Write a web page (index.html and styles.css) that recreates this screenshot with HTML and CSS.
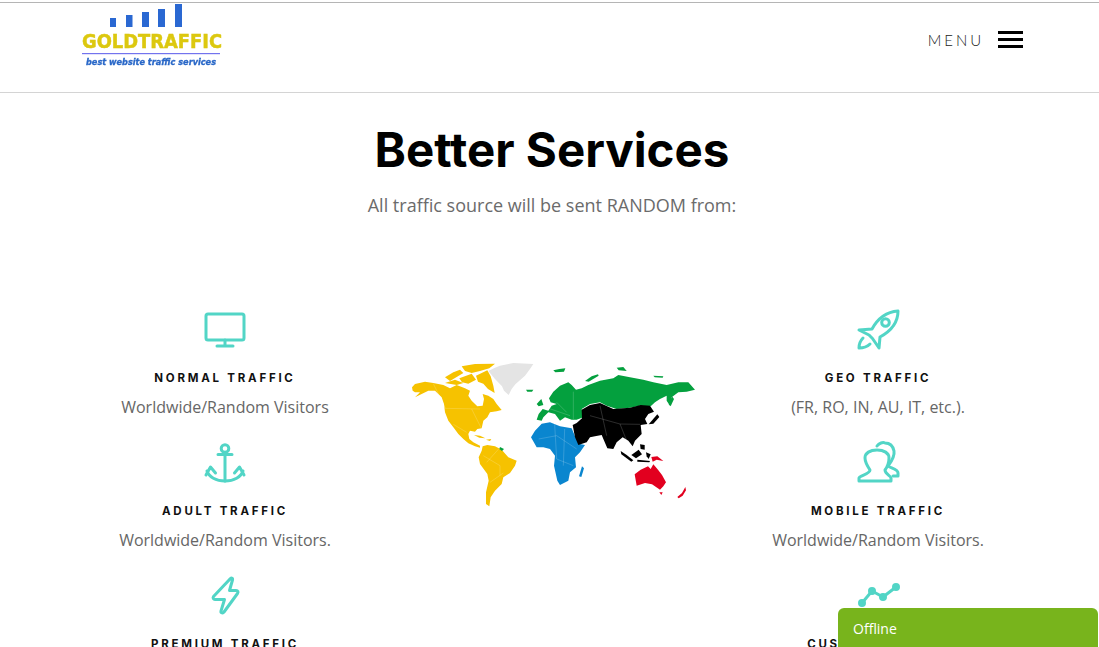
FILE: index.html
```html
<!DOCTYPE html>
<html lang="en">
<head>
  <meta charset="UTF-8">
  <meta name="viewport" content="width=device-width, initial-scale=1.0">
  <title>Goldtraffic - Better Services</title>
  <link rel="stylesheet" href="styles.css">
</head>
<body>

  <header class="header">
    <a class="logo" href="#">
      <svg width="180" height="66" viewBox="0 0 180 66">
        <g fill="#2a68d2">
          <rect x="28" y="15" width="6" height="9"/>
          <rect x="44" y="12" width="6.5" height="12"/>
          <rect x="60" y="9" width="7" height="15"/>
          <rect x="76" y="6" width="7" height="18"/>
          <rect x="93" y="1" width="7" height="23"/>
        </g>
        <text class="logo-name" x="0" y="45" textLength="140" lengthAdjust="spacingAndGlyphs">GOLDTRAFFIC</text>
        <rect x="0" y="50" width="138" height="1.2" fill="#7373ee"/>
        <text class="logo-tag" x="4" y="62" textLength="130" lengthAdjust="spacingAndGlyphs">best website traffic services</text>
      </svg>
    </a>
    <button class="menu-btn">
      <span class="menu-label">MENU</span>
      <span class="burger"><i></i><i></i><i></i></span>
    </button>
  </header>

  <main class="services">
    <h1>Better Services</h1>
    <p class="lead">All traffic source will be sent RANDOM from:</p>

    <div class="service-grid">
      <div class="service-col">
        <div class="service">
          <svg class="icon" viewBox="0 0 40 40">
            <rect x="1" y="5" width="38" height="26" rx="2"/>
            <path d="M20 31v6M12 37h16"/>
          </svg>
          <h3>NORMAL TRAFFIC</h3>
          <p>Worldwide/Random Visitors</p>
        </div>
        <div class="service">
          <svg class="icon" viewBox="0 0 40 40">
            <circle cx="20" cy="6.500" r="3.800"/>
            <path d="M20 10.500V39M13 12.500h14"/>
            <path d="M2 29C4 35 11 39 20 39S36 35 38 29"/>
            <path d="M1 33L5.500 25 10.500 31M39 33L34.500 25 29.500 31"/>
          </svg>
          <h3>ADULT TRAFFIC</h3>
          <p>Worldwide/Random Visitors.</p>
        </div>
        <div class="service">
          <svg class="icon" viewBox="0 0 40 40">
            <path d="M25 4C26 2.500 28 3 27.500 5L24.500 15.500H31C33 15.500 33.500 17 32.500 18.500L19 37C18 38.500 15.500 38 16 36L19.500 24.500H10C8.500 24.500 7.500 23 8.500 21.500Z"/>
          </svg>
          <h3>PREMIUM TRAFFIC</h3>
          <p>Worldwide/Random Visitors.</p>
        </div>
      </div>

      <div class="map-col">
        <svg class="world-map" viewBox="0 0 930 510">
          <g fill="#f6c200">
            <path d="M36 115L45 105 75 98 100 102 130 108 150 118 170 108 195 118 210 125 205 140 215 155 232 172 248 170 252 150 248 135 265 140 280 150 290 165 305 183 290 187 270 190 262 205 250 215 245 238 232 240 225 248 210 245 205 255 208 270 220 280 240 290 240 296 225 292 205 283 190 270 175 255 160 235 145 215 135 190 132 165 125 145 105 125 85 125 65 135 45 145 60 130 45 130 38 125Z"/>
            <path d="M248 292L262 288 285 292 305 302 325 325 350 335 345 350 330 372 310 385 305 405 285 425 272 445 268 472 258 465 258 430 266 395 262 375 240 345 236 325 245 305Z"/>
            <path d="M135 85L160 70 180 62 190 72 170 84 150 96Z"/>
            <path d="M185 52L225 45 285 44 268 58 240 66 215 72 195 66Z"/>
            <path d="M178 88L215 74 228 92 205 104 186 100Z"/>
            <path d="M228 80L262 64 272 82 280 110 284 132 264 120 250 104 234 98Z"/>
            <path d="M135 102L165 92 190 102 170 108Z"/>
            <path d="M222 258L240 260 256 268 238 266Z"/>
            <path d="M258 272L274 270 270 276Z"/>
          </g>
          <path fill="#e4e4e4" d="M265 66L285 56 300 50 340 42 400 45 390 60 375 80 346 106 335 120 326 138 312 125 306 112 285 90Z"/>
          <g fill="#04a03e">
            <path d="M410 212L416 195 428 180 445 185 455 170 470 165 452 160 447 148 460 128 480 110 505 100 515 108 528 122 545 118 565 108 600 95 640 88 655 78 690 85 730 92 760 100 800 108 835 100 865 100 885 122 860 128 835 130 815 145 810 170 800 155 800 140 780 150 765 160 752 172 720 170 690 176 650 180 620 170 600 160 570 165 545 180 550 205 530 212 515 212 495 205 480 215 465 195 445 190 430 205 425 215Z"/>
            <path d="M378 122H400L396 128H382Z"/>
            <path d="M460 64L478 60 496 58 492 68 466 70Z"/>
            <path d="M555 96L575 82 594 76 596 80 566 98Z"/>
            <path d="M650 56L670 54 680 66 656 64Z"/>
            <path d="M760 80L790 82 788 86 764 85Z"/>
            <path d="M410 165L424 150 430 168 416 172Z"/>
            <path d="M300 294L312 300 306 306 298 300Z"/>
            <path d="M806 166L816 142 822 150 812 172Z"/>
          </g>
          <g fill="#0a86cf">
            <path d="M393 265L405 245 425 224 450 220 480 232 515 238 525 262 540 285 555 288 540 310 525 325 528 355 510 370 505 395 480 408 472 395 462 350 465 320 450 300 430 295 410 295Z"/>
            <path d="M546 352L552 358 544 384 537 382Z"/>
          </g>
          <g fill="#000">
            <path d="M518 228L530 222 546 208 545 182 570 168 600 162 640 180 690 176 722 168 750 170 762 188 745 195 735 210 742 225 722 228 725 255 705 275 698 292 685 275 668 265 650 280 640 300 622 298 605 258 585 262 570 265 560 280 535 288 525 265Z"/>
            <path d="M746 226L772 196 778 204 760 224Z"/>
            <path d="M662 306L680 318 700 334 694 338 664 316Z"/>
            <path d="M694 318L716 302 726 316 708 328Z"/>
            <path d="M720 286L734 288 734 302 722 300Z"/>
            <path d="M712 332L750 336 748 340 712 338Z"/>
            <path d="M738 310L752 316 746 330 740 322Z"/>
          </g>
          <g fill="#e2001f">
            <path d="M704 376L722 362 744 352 752 360 760 346 774 362 786 378 798 400 790 412 780 422 756 406 735 402 710 410Z"/>
            <path d="M754 324L772 322 790 336 770 332 758 338Z"/>
            <path d="M778 430H788L784 438Z"/>
            <path d="M832 444L846 432 856 414 858 424 848 440 836 448Z"/>
          </g>
          <g class="borders">
            <path d="M100 104L136 178 240 180M215 180L244 238M160 226L200 250"/>
            <path d="M250 320L300 350 300 380M270 400L310 372M260 340L296 300"/>
            <path d="M440 176L510 200M470 160L500 190M520 128L520 210"/>
            <path d="M416 270L470 260 530 300M464 226L470 330 520 350M494 240L490 350"/>
            <path d="M570 200L660 225 720 226M600 170L620 260M660 225L680 275"/>
          </g>
        </svg>
      </div>

      <div class="service-col">
        <div class="service">
          <svg class="icon" viewBox="0 0 40 40">
            <path d="M14 20C20 9 28 3 40 2 40 14 33 22 22 28L21 39 14.500 29.500 11 26 1 21Z"/>
            <circle cx="27.500" cy="13.500" r="3.800"/>
            <path d="M5 29C2 32 1 35 1 39 5 39 9 38 12 35"/>
          </svg>
          <h3>GEO TRAFFIC</h3>
          <p>(FR, RO, IN, AU, IT, etc.).</p>
        </div>
        <div class="service">
          <svg class="icon" viewBox="0 0 40 40">
            <path d="M1 39V36C1 34 12 32 12 28 8 22 7 18 7 16 7 11 12 8 19 8S31 11 31 16C31 20 30 24 27 28 27 32 33 34 33 36V39Z"/>
            <path d="M19 4C21 1 25 0 27 1 32 1 35 4 36 9 37 15 33 20 30 24 32 26 40 27 40 31V34H35"/>
          </svg>
          <h3>MOBILE TRAFFIC</h3>
          <p>Worldwide/Random Visitors.</p>
        </div>
        <div class="service">
          <svg class="icon icon-filled" viewBox="0 0 40 40">
            <path d="M4 28L14 16 25 22 38 12"/>
            <circle cx="4" cy="28" r="2.500"/>
            <circle cx="14" cy="16" r="2.500"/>
            <circle cx="25" cy="22" r="2.500"/>
            <circle cx="38" cy="12" r="2.500"/>
          </svg>
          <h3>CUSTOM TRAFFIC</h3>
          <p>Worldwide/Random Visitors.</p>
        </div>
      </div>
    </div>
  </main>

  <div class="chat-tab">Offline</div>

</body>
</html>
```

FILE: styles.css
```css
* {
  margin: 0;
  padding: 0;
  box-sizing: border-box;
}

html, body {
  height: 100%;
  overflow: hidden;
}

body {
  font-family: 'Open Sans', Arial, sans-serif;
  background: #fff;
  color: #666;
}

.header {
  height: 91px;
  margin-top: 2px;
  border-top: 1px solid #b5b5b5;
  border-bottom: 1px solid #d4d4d4;
  padding: 0 76px 0 82px;
  display: flex;
  justify-content: space-between;
}

.logo {
  display: block;
  height: 66px;
}

.logo svg {
  display: block;
  filter: blur(0.3px);
}

.logo-name {
  font-family: 'DejaVu Sans', sans-serif;
  font-weight: bold;
  font-size: 20px;
  fill: #dcc80f;
  stroke: #dcc80f;
  stroke-width: 0.5px;
}

.logo-tag {
  font-family: 'DejaVu Sans', sans-serif;
  font-weight: bold;
  font-style: italic;
  font-size: 8px;
  fill: #2a68c8;
  stroke: #2a68c8;
  stroke-width: 0.3px;
}

.menu-btn {
  display: flex;
  align-items: center;
  gap: 14px;
  height: 72px;
  background: none;
  border: none;
  font: inherit;
}

.menu-label {
  font-family: Lato, sans-serif;
  font-weight: 300;
  font-size: 15px;
  letter-spacing: 2.900px;
  padding-top: 2px;
  color: #222;
}

.burger {
  width: 25px;
  display: flex;
  flex-direction: column;
  gap: 4px;
}

.burger i {
  display: block;
  height: 3px;
  background: #000;
}

.services {
  padding-left: 5px;
  text-align: center;
}

h1 {
  font-family: Inter, sans-serif;
  font-size: 47.500px;
  font-weight: 700;
  line-height: 56px;
  margin-top: 29px;
  color: #000;
}

.lead {
  font-size: 18px;
  line-height: 26px;
  margin-top: 14px;
  color: #6b6b6b;
}

.service-grid {
  display: grid;
  grid-template-columns: 324px 328px 326px;
  justify-content: center;
  margin-top: 91px;
}

.service {
  height: 133px;
}

.icon {
  display: block;
  width: 40px;
  height: 40px;
  margin: 0 auto;
  overflow: visible;
  fill: none;
  stroke: #52d5c6;
  stroke-width: 3;
  stroke-linecap: round;
  stroke-linejoin: round;
}

.icon-filled circle {
  fill: #52d5c6;
}

.service h3 {
  font-family: Inter, sans-serif;
  font-size: 11.500px;
  font-weight: 700;
  letter-spacing: 2.750px;
  line-height: 16px;
  margin-top: 21px;
  color: #111;
}

.service p {
  font-size: 16px;
  line-height: 24px;
  margin-top: 9px;
}

.map-col {
  padding: 40px 0 0 8px;
}

.world-map {
  display: block;
  width: 310px;
  height: 170px;
  margin: 0 auto;
  filter: blur(0.3px);
}

.borders {
  fill: none;
  stroke: #fff;
  stroke-opacity: 0.35;
  stroke-width: 1.500;
}

.chat-tab {
  position: fixed;
  right: 1px;
  bottom: 0;
  width: 260px;
  height: 39px;
  padding: 11px 15px 0;
  background: #78b41c;
  border-radius: 6px 6px 0 0;
  font-family: 'Open Sans', Arial, sans-serif;
  font-size: 14px;
  line-height: 20px;
  color: #fff;
}
```
